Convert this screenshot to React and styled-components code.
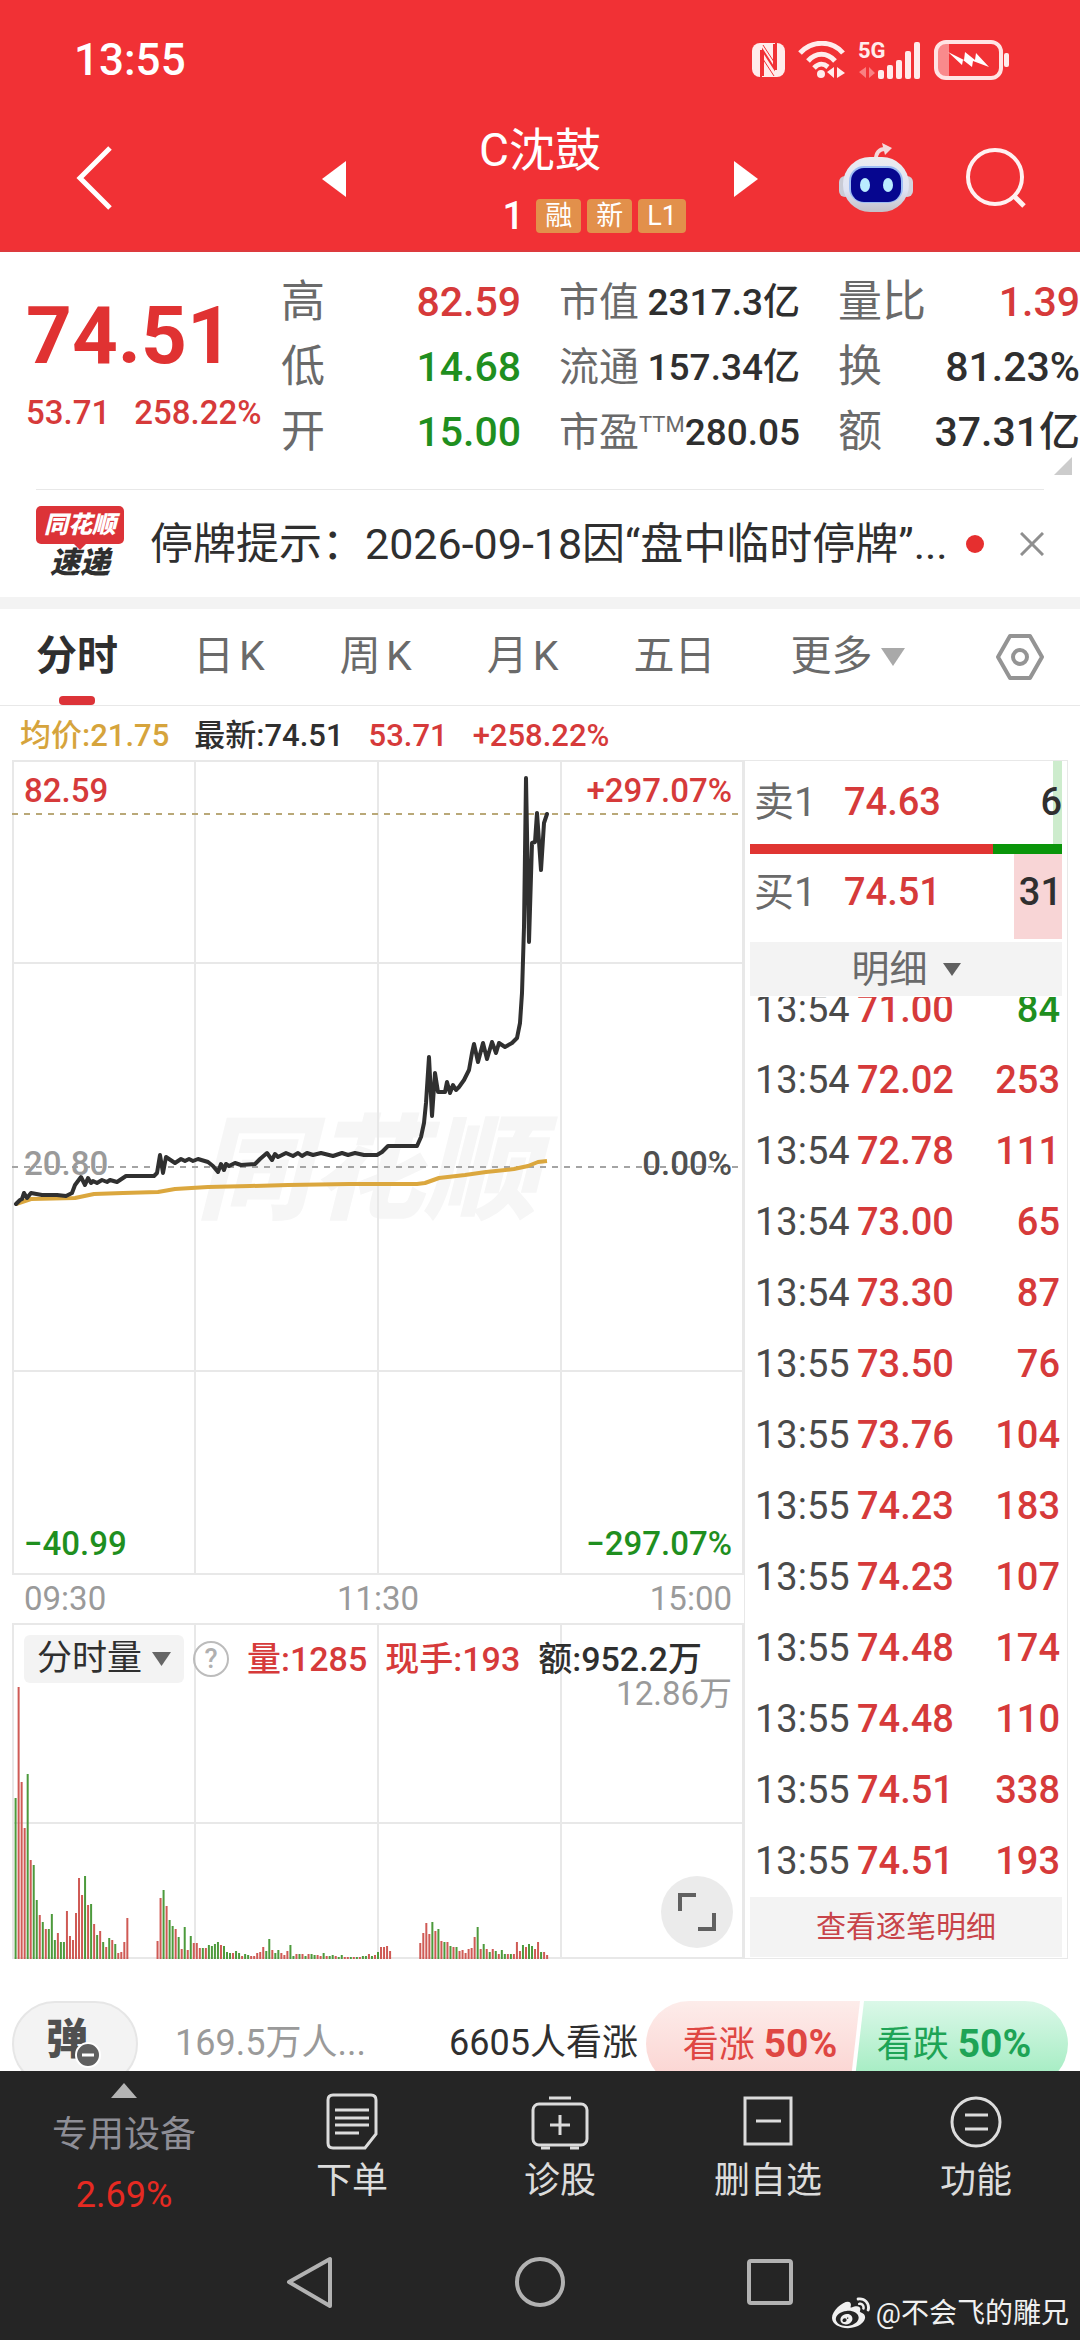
import React from 'react';
import styled, { createGlobalStyle } from 'styled-components';
import { FaWeibo } from 'react-icons/fa';

const colors = {
	brand: '#f13135',
	red: '#d63a3a',
	green: '#1f8f1f',
	text: '#2f2f2f',
	label: '#6a6a6a',
	muted: '#9a9a9a',
	line: '#e8e8e8',
	band: '#f3f3f3',
	dock: '#252525',
};

const toneColor = {
	up: colors.red,
	down: colors.green,
	dark: colors.text,
	avg: '#d6a43c',
};

const GlobalStyle = createGlobalStyle`
	* {
		box-sizing: border-box;
	}
	body {
		margin: 0;
		background: #ffffff;
		color: ${colors.text};
		font-family: Roboto, 'Noto Sans CJK SC', sans-serif;
		line-height: 1.2;
	}
	button, select {
		padding: 0;
		border: none;
		background: none;
		color: inherit;
		font: inherit;
	}
	svg {
		display: block;
	}
	dl, dd, ul {
		margin: 0;
		padding: 0;
	}
	ul {
		list-style: none;
	}
`;

const Page = styled.div`
	display: flex;
	flex-direction: column;
	height: 100vh;
	overflow: hidden;
	white-space: nowrap;
`;

const Header = styled.header`
	flex: none;
	background: ${colors.brand};
	border-bottom: 2px solid #dd3a3e;
	color: #ffffff;
`;

const StatusBar = styled.div`
	display: flex;
	align-items: center;
	justify-content: space-between;
	height: 120px;
	padding: 0 70px 0 74px;
`;

const Clock = styled.span`
	font-size: 44px;
	font-weight: 500;
`;

const StatusIcons = styled.div`
	display: flex;
	align-items: center;
	gap: 12px;
`;

const TitleBar = styled.div`
	display: grid;
	grid-template-columns: 1fr 436px 1fr;
	align-items: center;
	height: 130px;
	padding: 0 54px 0 76px;
`;

const BackButton = styled.button`
	justify-self: start;
	margin-top: -14px;
`;

const StockSwitch = styled.div`
	display: flex;
	align-items: center;
	justify-content: space-between;
	margin-left: -11px;
	margin-right: 11px;
`;

const StepButton = styled.button`
	padding-bottom: 12px;
`;

const StockTitle = styled.div`
	display: flex;
	flex-direction: column;
	align-items: center;
	padding-bottom: 16px;
`;

const StockName = styled.h1`
	margin: 0 0 20px;
	font-size: 46px;
	font-weight: 400;
	line-height: 58px;
`;

const StockMeta = styled.div`
	display: flex;
	align-items: center;
	gap: 6px;
`;

const StockCode = styled.span`
	width: 130px;
	margin-right: 6px;
	font-size: 38px;
	line-height: 34px;
	font-weight: 500;
	text-align: right;
`;

const Tag = styled.span`
	padding: 0 9px;
	border-radius: 4px;
	background: #e2904b;
	font-size: 27px;
	line-height: 34px;
`;

const HeaderTools = styled.div`
	display: flex;
	align-items: center;
	justify-content: flex-end;
	gap: 52px;
	padding-bottom: 14px;
`;

const Main = styled.main`
	flex: 1;
	min-height: 0;
	overflow: hidden;
`;

const Quote = styled.section`
	position: relative;
	display: grid;
	grid-template-columns: minmax(0, 217fr) minmax(0, 240fr) minmax(0, 241fr) minmax(0, 242fr);
	column-gap: 38px;
	padding: 18px 0 24px 26px;
`;

const CornerMark = styled.svg`
	position: absolute;
	right: 8px;
	bottom: 14px;
`;

const LastPrice = styled.div`
	margin-top: 26px;
	color: #e03232;
	font-size: 80px;
	font-weight: 700;
	line-height: 80px;
`;

const Change = styled.div`
	display: flex;
	gap: 24px;
	margin-top: 17px;
	color: ${colors.red};
	font-size: 33px;
	font-weight: 500;
	line-height: 40px;
`;

const Stat = styled.div`
	display: flex;
	justify-content: space-between;
	line-height: 65px;
`;

const StatLabel = styled.dt`
	color: ${colors.label};
	font-size: ${p => (p.$small ? 40 : 44)}px;
	sup {
		font-size: 22px;
		line-height: 22px;
	}
`;

const StatValue = styled.dd`
	color: ${p => toneColor[p.$tone]};
	font-size: ${p => (p.$small ? 37 : 41)}px;
	font-weight: 500;
`;

const Notice = styled.section`
	display: flex;
	align-items: center;
	height: 108px;
	margin: 0 36px;
	border-top: 1px solid ${colors.line};
`;

const NoticeLogo = styled.div`
	display: flex;
	flex-direction: column;
	align-items: center;
	width: 88px;
	margin-right: 26px;
	font-weight: 900;
	font-style: italic;
`;

const LogoBadge = styled.span`
	position: relative;
	width: 100%;
	background: #dc3338;
	border-radius: 5px;
	color: #ffffff;
	font-size: 24px;
	line-height: 38px;
	text-align: center;
	&::after {
		content: '';
		position: absolute;
		top: 100%;
		left: 38px;
		border: 6px solid transparent;
		border-top-color: #dc3338;
		border-bottom: none;
	}
`;

const LogoText = styled.span`
	font-size: 30px;
	line-height: 38px;
`;

const NoticeText = styled.p`
	flex: 1;
	min-width: 0;
	margin: 0;
	overflow: hidden;
	font-size: 43px;
	line-height: 60px;
`;

const Dot = styled.span`
	width: 18px;
	height: 18px;
	margin: 0 36px 0 12px;
	border-radius: 50%;
	background: #e62f2f;
`;

const Tabs = styled.nav`
	display: flex;
	align-items: center;
	gap: 75px;
	height: 109px;
	padding: 0 36px;
	border-top: 12px solid ${colors.band};
	border-bottom: 1px solid ${colors.line};
`;

const Tab = styled.button`
	position: relative;
	display: flex;
	align-items: center;
	gap: 8px;
	height: 100%;
	color: ${p => (p.$active ? colors.text : colors.label)};
	font-size: 41px;
	font-weight: ${p => (p.$active ? 700 : 400)};
	text-autospace: normal;
	&::after {
		content: '';
		display: ${p => (p.$active ? 'block' : 'none')};
		position: absolute;
		left: 50%;
		bottom: 0;
		width: 36px;
		height: 9px;
		margin-left: -18px;
		border-radius: 4px;
		background: #dc3338;
	}
`;

const SettingsButton = styled.button`
	margin-left: auto;
`;

const ChartInfo = styled.div`
	display: flex;
	gap: 25px;
	height: 54px;
	padding-left: 20px;
	font-size: 31px;
	font-weight: 500;
	line-height: 60px;
`;

const Toned = styled.span`
	color: ${p => toneColor[p.$tone]};
`;

const Board = styled.section`
	display: grid;
	grid-template-columns: 732fr 324fr;
	margin: 0 12px;
`;

const PriceChart = styled.div`
	position: relative;
	height: 815px;
`;

const Plot = styled.svg`
	width: 100%;
	height: 100%;
`;

const Watermark = styled.div`
	position: absolute;
	top: 346px;
	left: 184px;
	color: #f6f6f6;
	font-size: 114px;
	font-weight: 900;
	font-style: italic;
	line-height: 130px;
	z-index: -1;
`;

const AxisLabel = styled.span`
	position: absolute;
	${p => p.$side}: 12px;
	top: ${p => p.$top}px;
	color: ${p => p.$color};
	font-size: 33px;
	font-weight: ${p => (p.$light ? 400 : 500)};
	line-height: 40px;
`;

const TimeAxis = styled.div`
	display: flex;
	justify-content: space-between;
	padding: 0 12px;
	color: ${colors.muted};
	font-size: 33px;
	line-height: 48px;
`;

const VolumeChart = styled.div`
	position: relative;
	height: 336px;
`;

const VolumeHead = styled.div`
	position: absolute;
	top: 12px;
	left: 12px;
	display: flex;
	align-items: center;
	gap: 18px;
	font-size: 34px;
	font-weight: 500;
	line-height: 48px;
`;

const Picker = styled.label`
	display: flex;
	align-items: center;
	justify-content: center;
	gap: ${p => (p.$wide ? 14 : 9)}px;
	height: ${p => (p.$wide ? 54 : 48)}px;
	margin-top: ${p => (p.$wide ? 3 : 0)}px;
	padding: 0 13px;
	border-radius: ${p => (p.$wide ? 0 : 6)}px;
	background: ${colors.band};
	color: ${p => (p.$wide ? colors.label : colors.text)};
	font-size: ${p => (p.$wide ? 38 : 35)}px;
	font-weight: 400;
	select {
		appearance: none;
		line-height: 48px;
	}
`;

const HelpButton = styled.button`
	width: 36px;
	height: 36px;
	margin: 0 0 0 -9px;
	border: 2px solid #bcbcbc;
	border-radius: 50%;
	color: #b0b0b0;
	font-size: 27px;
	line-height: 32px;
`;

const ExpandButton = styled.button`
	position: absolute;
	right: 11px;
	bottom: 11px;
	display: flex;
	align-items: center;
	justify-content: center;
	width: 72px;
	height: 72px;
	border-radius: 50%;
	background: #ebebeb;
`;

const OrderPanel = styled.aside`
	display: flex;
	flex-direction: column;
	padding: 0 5px 1px;
	border: 1px solid ${colors.line};
`;

const OrderRow = styled.div`
	display: flex;
	align-items: center;
	height: ${p => (p.$buy ? 85 : 83)}px;
	padding: 0 0 ${p => (p.$buy ? 8 : 0)}px 4px;
	background: linear-gradient(${p => (p.$buy ? '#f8d5d6, #f8d5d6' : '#cdeccd, #cdeccd')}) right / ${p => (p.$buy ? 48 : 9)}px 100% no-repeat;
	font-size: 38px;
	font-weight: 500;
`;

const OrderSide = styled.span`
	width: 90px;
	color: ${colors.label};
	font-size: 40px;
	font-weight: 400;
`;

const OrderVolume = styled.span`
	margin-left: auto;
`;

const RatioBar = styled.div`
	height: 10px;
	background: linear-gradient(to right, #e03532 78%, #0a950a 78%);
`;

const TickList = styled.ul`
	display: flex;
	flex-direction: column;
	justify-content: flex-end;
	height: 900px;
	margin-top: 1px;
	overflow: hidden;
`;

const Tick = styled.li`
	display: grid;
	flex: none;
	grid-template-columns: 102px 1fr auto;
	padding: 0 2px 0 5px;
	font-size: 38px;
	font-weight: 500;
	line-height: 71px;
`;

const TickTime = styled.span`
	color: #4a4a4a;
	font-weight: 400;
`;

const DetailLink = styled.a`
	background: ${colors.band};
	color: #c8444a;
	font-size: 30px;
	line-height: 60px;
	text-align: center;
	text-decoration: none;
`;

const VoteRow = styled.section`
	display: flex;
	align-items: center;
	height: 86px;
	margin: 42px 12px 0;
	font-size: 36px;
`;

const BulletButton = styled.button`
	position: relative;
	width: 126px;
	height: 86px;
	padding: 0 16px 8px 0;
	border: 2px solid #e6e6e6;
	border-radius: 43px;
	background: ${colors.band};
	color: #505050;
	font-size: 42px;
	font-weight: 900;
	svg {
		position: absolute;
		left: 60px;
		top: 38px;
	}
`;

const Watching = styled.span`
	flex: 1;
	margin-left: 37px;
	color: ${colors.muted};
`;

const VoteButton = styled.button`
	height: 86px;
	width: 214px;
	margin-left: ${p => (p.$up ? 8 : -6)}px;
	padding-${p => (p.$up ? 'left' : 'right')}: 14px;
	border-radius: ${p => (p.$up ? '43px 0 0 43px' : '0 43px 43px 0')};
	background: ${p => (p.$up ? 'linear-gradient(#fdecea, #fbd2cf)' : 'linear-gradient(#dbf8e8, #9debbd)')};
	clip-path: ${p => (p.$up ? 'polygon(0 0, 100% 0, 204px 100%, 0 100%)' : 'polygon(10px 0, 100% 0, 100% 100%, 0 100%)')};
	color: ${p => (p.$up ? '#df4743' : '#1ea456')};
	font-size: 36px;
	b {
		font-size: 39px;
	}
`;

const Dock = styled.footer`
	position: relative;
	flex: none;
	height: 269px;
	background: ${colors.dock};
	color: #dcdcdc;
`;

const DockActions = styled.div`
	display: grid;
	grid-template-columns: 31fr 26fr 26fr 26fr 26fr;
	height: 153px;
`;

const DockButton = styled.button`
	display: flex;
	flex-direction: column;
	align-items: center;
	gap: 3px;
	padding-top: 20px;
	font-size: 36px;
	line-height: 54px;
`;

const SectorButton = styled.button`
	display: flex;
	flex-direction: column;
	align-items: center;
	padding-top: 12px;
	color: #8e8e96;
	font-size: 36px;
	line-height: 60px;
	svg {
		margin-bottom: 7px;
	}
`;

const SectorChange = styled.span`
	color: #e62a22;
`;

const SystemNav = styled.div`
	display: grid;
	grid-template-columns: repeat(3, 230px);
	justify-content: center;
	justify-items: center;
	padding-top: 32px;
`;

const Signature = styled.div`
	position: absolute;
	right: 11px;
	bottom: 6px;
	display: flex;
	align-items: center;
	gap: 6px;
	color: #f0f0f0;
	font-size: 28px;
	line-height: 40px;
`;

const statColumns = [
	{
		rows: [
			['高', '82.59', 'up'],
			['低', '14.68', 'down'],
			['开', '15.00', 'down'],
		],
	},
	{
		small: true,
		rows: [
			['市值', '2317.3亿', 'dark'],
			['流通', '157.34亿', 'dark'],
			['市盈', '280.05', 'dark', 'TTM'],
		],
	},
	{
		rows: [
			['量比', '1.39', 'up'],
			['换', '81.23%', 'dark'],
			['额', '37.31亿', 'dark'],
		],
	},
];

const ticks = [
	['13:54', '71.00', '84', 'down'],
	['13:54', '72.02', '253', 'up'],
	['13:54', '72.78', '111', 'up'],
	['13:54', '73.00', '65', 'up'],
	['13:54', '73.30', '87', 'up'],
	['13:55', '73.50', '76', 'up'],
	['13:55', '73.76', '104', 'up'],
	['13:55', '74.23', '183', 'up'],
	['13:55', '74.23', '107', 'up'],
	['13:55', '74.48', '174', 'up'],
	['13:55', '74.48', '110', 'up'],
	['13:55', '74.51', '338', 'up'],
	['13:55', '74.51', '193', 'up'],
];

const priceLine =
	'4,444 8,440 10,439 12,433 15,438 19,433 30,435 45,435 54,436 60,433 63,425 69,417 73,425 76,418 79,423 81,421 85,423 90,420 95,422 98,420 105,422 ' +
	'114,416 142,416 145,413 148,395 151,413 154,397 157,399 163,403 169,399 173,401 177,399 181,401 186,399 196,402 201,406 206,412 209,404 212,410 214,404 217,406 ' +
	'223,403 229,405 243,404 248,399 255,393 260,400 263,394 266,397 274,393 281,396 286,393 290,396 295,393 301,395 309,393 321,396 330,393 336,395 343,393 352,395 ' +
	'365,395 370,392 376,386 405,386 409,377 412,363 414,343 417,297 420,356 423,313 426,332 433,332 435,322 438,333 441,325 444,330 447,327 452,320 457,310 460,293 ' +
	'462,284 466,302 471,283 475,299 480,282 484,293 487,283 493,287 500,283 505,278 508,263 510,233 512,167 514,18 517,182 520,83 523,82 525,53 529,110 532,63 535,54';

const averageLine =
	'4,444 19,439 63,438 82,434 111,433 146,432 163,429 196,427 238,426 276,425 337,424 405,424 413,423 427,418 453,415 474,412 502,409 516,406 526,402 535,401';

// one entry per minute: direction + bar height, "-" for a minute without trades
const volumes = (
	'g161 r272 r177 r131 g185 r99 g94 g59 r44 g37 r30 g30 g45 g19 r26 g17 g17 r48 r23 r19 r46 r81 r64 g83 r54 g55 r35 g24 r28 g17 r12 g21 r19 g15 r6 r7 r17 r41 ' +
	'- - - - - - - - - r18 r61 g69 r53 g39 g33 r30 g22 r10 g32 r9 g23 r16 r16 r11 g11 r11 g14 g13 g15 g17 r14 g13 g7 g6 r6 g8 g6 r3 g5 g4 r3 r3 r6 r7 r12 g8 g20 r9 ' +
	'g6 g9 r6 r4 r8 g14 g3 r5 g5 r5 g3 r5 g5 g4 r4 r3 g6 r3 g3 g4 r3 g2 g4 r2 r2 g2 r2 g2 r2 g3 g3 r5 g3 r4 g7 r12 r12 r13 r8 ' +
	'- - - - - - - - - r16 r26 r36 r25 g37 r28 g30 r18 g17 r17 g13 r12 g12 r8 r9 r6 r10 r11 r22 g32 r10 g15 r10 g7 r10 g8 r5 g9 g5 r5 g5 r5 r17 r8 g14 r12 g15 g13 r10 r17 g7 r7 r4'
).split(' ');

const Triangle = ({ dir, w, h, fill }) => {
	const points = {
		left: `${w},0 ${w},${h} 0,${h / 2}`,
		right: `0,0 ${w},${h / 2} 0,${h}`,
		up: `${w / 2},0 ${w},${h} 0,${h}`,
		down: `0,0 ${w},0 ${w / 2},${h}`,
	};
	return (
		<svg width={w} height={h} viewBox={`0 0 ${w} ${h}`} aria-hidden="true">
			<polygon points={points[dir]} fill={fill} />
		</svg>
	);
};

const SignalIcons = () => (
	<StatusIcons>
		<svg width="35" height="38" viewBox="0 0 35 38">
			<rect x="1" y="2" width="33" height="34" rx="8" fill="#ffecec" />
			<path d="M12 35V10l11 17V3" fill="none" stroke={colors.brand} strokeWidth="2" />
			<path d="M12 4l13 20M10 15l13 20" fill="none" stroke={colors.brand} strokeWidth="1" />
			<path d="M10 36V9M25 2v27" stroke={colors.brand} strokeWidth="2" />
		</svg>
		<svg width="48" height="38" viewBox="0 0 48 38" fill="none" stroke="#ffecec">
			<path d="M2 12C14-1 34-1 45 12" strokeWidth="5" />
			<path d="M10 20c8-9 19-9 27 0" strokeWidth="5" />
			<path d="M16 27c5-5 9-5 14-1" strokeWidth="5" />
			<circle cx="23" cy="33" r="4" fill="#ffecec" stroke="none" />
			<path d="M36 26v11l-7-6zM39 37V26l8 6z" fill="#ffecec" stroke="none" />
		</svg>
		<svg width="64" height="50" viewBox="0 -6 64 50">
			<text x="0" y="17" fontSize="22" fontWeight="700" fill="#ffecec">5G</text>
			<path d="M8 26v11l-7-6zM11 37V26l6 6z" fill="#f98082" />
			<g fill="#ffecec">
				<rect x="20" y="29" width="6" height="9" rx="2" />
				<rect x="29" y="24" width="6" height="14" rx="2" />
				<rect x="38" y="19" width="6" height="19" rx="2" />
				<rect x="47" y="10" width="6" height="28" rx="2" />
				<rect x="56" y="1" width="6" height="37" rx="2" />
			</g>
		</svg>
		<svg width="76" height="40" viewBox="0 0 76 40">
			<path d="M14 3h1v34h-3q-9 0-9-9V12q0-9 11-9z" fill="#f98a8c" />
			<rect x="2" y="2" width="65" height="36" rx="10" fill="none" stroke="#ffe4e4" strokeWidth="4" />
			<rect x="70" y="13" width="5" height="14" rx="2" fill="#ffecec" />
			<path d="M14 12l16 8 1-8 10 8 1-7 13 14-16-6-1 6-9-7-1 5z" fill="#ffffff" />
		</svg>
	</StatusIcons>
);

const RobotIcon = () => (
	<svg width="76" height="70" viewBox="0 0 76 70">
		<defs>
			<linearGradient id="shell" x1="0" y1="0" x2="0" y2="1">
				<stop offset="0" stopColor="#ececf0" />
				<stop offset="0.6" stopColor="#dfe3f3" />
				<stop offset="1" stopColor="#c3c0c8" />
			</linearGradient>
		</defs>
		<rect x="1" y="33" width="12" height="21" rx="6" fill="#c9cbd6" />
		<rect x="63" y="33" width="12" height="21" rx="6" fill="#d3d4de" />
		<path d="M38 16c0-6 3-10 9-10" fill="none" stroke="#f3d9dc" strokeWidth="4" />
		<path d="M44 0l10 5-7 7z" fill="#f3d9dc" />
		<rect x="5" y="14" width="66" height="55" rx="27" fill="url(#shell)" />
		<rect x="11" y="23" width="54" height="37" rx="15" fill="#9dbdf4" />
		<rect x="13" y="25" width="50" height="34" rx="13" fill="#06068f" />
		<ellipse cx="27" cy="42" rx="5" ry="7" fill="#b9ecff" />
		<ellipse cx="50" cy="42" rx="5" ry="7" fill="#b9ecff" />
	</svg>
);

const dockItems = [
	{
		label: '下单',
		icon: (
			<svg width="60" height="60" viewBox="0 0 60 60" fill="none" stroke="#dcdcdc" strokeWidth="3">
				<path d="M11 4h38q5 0 5 5v34L43 57H11q-5 0-5-5V9q0-5 5-5z" />
				<path d="M13 19h34M13 27h34M13 34h34M13 42h24" />
			</svg>
		),
	},
	{
		label: '诊股',
		icon: (
			<svg width="60" height="60" viewBox="0 0 60 60" fill="none" stroke="#dcdcdc" strokeWidth="3">
				<rect x="3" y="13" width="54" height="41" rx="6" />
				<path d="M19 7h22M30 24v20M20 34h20M11 57h9M40 57h9" />
			</svg>
		),
	},
	{
		label: '删自选',
		icon: (
			<svg width="60" height="60" viewBox="0 0 60 60" fill="none" stroke="#dcdcdc" strokeWidth="3">
				<rect x="7" y="7" width="46" height="46" />
				<path d="M18 30h25" />
			</svg>
		),
	},
	{
		label: '功能',
		icon: (
			<svg width="60" height="60" viewBox="0 0 60 60" fill="none" stroke="#dcdcdc" strokeWidth="3">
				<circle cx="30" cy="31" r="24" />
				<path d="M19 24h23M19 38h23" />
			</svg>
		),
	},
];

const Grid = ({ rows, bottom }) => (
	<g stroke={colors.line} strokeWidth="2" fill="none">
		<rect x="1" y="1" width="730" height={bottom - 2} />
		<path d={`M183 0V${bottom}M366 0V${bottom}M549 0V${bottom}`} />
		{rows.map(y => (
			<path key={y} d={`M0 ${y}H732`} />
		))}
	</g>
);

const App = () => {
	const [tab, setTab] = React.useState('分时');

	return (
		<Page>
			<GlobalStyle />
			<Header>
				<StatusBar>
					<Clock>13:55</Clock>
					<SignalIcons />
				</StatusBar>
				<TitleBar>
					<BackButton aria-label="返回">
						<svg width="36" height="64" viewBox="0 0 36 64" fill="none" stroke="#ffffff" strokeWidth="5">
							<path d="M34 2L4 32l30 30" />
						</svg>
					</BackButton>
					<StockSwitch>
						<StepButton aria-label="上一只">
							<Triangle dir="left" w={24} h={36} fill="#ffffff" />
						</StepButton>
						<StockTitle>
							<StockName>C沈鼓</StockName>
							<StockMeta>
								<StockCode>1</StockCode>
								<Tag>融</Tag>
								<Tag>新</Tag>
								<Tag>L1</Tag>
							</StockMeta>
						</StockTitle>
						<StepButton aria-label="下一只">
							<Triangle dir="right" w={24} h={36} fill="#ffffff" />
						</StepButton>
					</StockSwitch>
					<HeaderTools>
						<button aria-label="助手">
							<RobotIcon />
						</button>
						<button aria-label="搜索">
							<svg width="60" height="60" viewBox="0 0 60 60" fill="none" stroke="#fff1f1" strokeWidth="4">
								<circle cx="29" cy="29" r="27" />
								<path d="M47 47l11 11" strokeWidth="5" />
							</svg>
						</button>
					</HeaderTools>
				</TitleBar>
			</Header>

			<Main>
				<Quote>
					<div>
						<LastPrice>74.51</LastPrice>
						<Change>
							<span>53.71</span>
							<span>258.22%</span>
						</Change>
					</div>
					{statColumns.map((column, i) => (
						<dl key={i}>
							{column.rows.map(([label, value, tone, sup]) => (
								<Stat key={label}>
									<StatLabel $small={column.small}>
										{label}
										{sup && <sup>{sup}</sup>}
									</StatLabel>
									<StatValue $small={column.small} $tone={tone}>{value}</StatValue>
								</Stat>
							))}
						</dl>
					))}
					<CornerMark width="18" height="18" viewBox="0 0 18 18">
						<path d="M18 0v18H0z" fill="#cccccc" />
					</CornerMark>
				</Quote>

				<Notice>
					<NoticeLogo>
						<LogoBadge>同花顺</LogoBadge>
						<LogoText>速递</LogoText>
					</NoticeLogo>
					<NoticeText>停牌提示：2026-09-18因“盘中临时停牌”...</NoticeText>
					<Dot />
					<button aria-label="关闭">
						<svg width="24" height="24" viewBox="0 0 24 24" stroke="#8f8f8f" strokeWidth="3">
							<path d="M1 1l22 22M23 1L1 23" />
						</svg>
					</button>
				</Notice>

				<Tabs>
					{['分时', '日K', '周K', '月K', '五日'].map(name => (
						<Tab key={name} $active={tab === name} onClick={() => setTab(name)}>{name}</Tab>
					))}
					<Tab aria-haspopup="menu">
						更多
						<Triangle dir="down" w={24} h={18} fill="#a9a9a9" />
					</Tab>
					<SettingsButton aria-label="设置">
						<svg width="48" height="48" viewBox="0 0 48 48" fill="none" stroke="#949494" strokeWidth="4" strokeLinejoin="round">
							<path d="M14 3h20l12 21-12 21H14L2 24z" />
							<circle cx="24" cy="24" r="7" />
						</svg>
					</SettingsButton>
				</Tabs>

				<ChartInfo>
					<Toned $tone="avg">均价:21.75</Toned>
					<Toned $tone="dark">最新:74.51</Toned>
					<Toned $tone="up">53.71</Toned>
					<Toned $tone="up">+258.22%</Toned>
				</ChartInfo>

				<Board>
					<div>
						<PriceChart>
							<Watermark>同花顺</Watermark>
							<Plot viewBox="0 0 732 815" preserveAspectRatio="none">
								<Grid rows={[203, 611]} bottom={815} />
								<path d="M0 54H732" stroke="#b9a878" strokeWidth="2" strokeDasharray="6 6" />
								<path d="M0 407H732" stroke="#a4a4a4" strokeWidth="2" strokeDasharray="6 6" />
								<polyline points={averageLine} fill="none" stroke="#dba73e" strokeWidth="4" strokeLinejoin="round" />
								<polyline points={priceLine} fill="none" stroke="#303030" strokeWidth="4" strokeLinejoin="round" strokeLinecap="round" />
							</Plot>
							<AxisLabel $side="left" $top={11} $color={colors.red}>82.59</AxisLabel>
							<AxisLabel $side="right" $top={11} $color={colors.red}>+297.07%</AxisLabel>
							<AxisLabel $side="left" $top={384} $color={colors.muted}>20.80</AxisLabel>
							<AxisLabel $side="right" $top={384} $color="#505050">0.00%</AxisLabel>
							<AxisLabel $side="left" $top={764} $color={colors.green}>−40.99</AxisLabel>
							<AxisLabel $side="right" $top={764} $color={colors.green}>−297.07%</AxisLabel>
						</PriceChart>
						<TimeAxis>
							<span>09:30</span>
							<span>11:30</span>
							<span>15:00</span>
						</TimeAxis>
						<VolumeChart>
							<Plot viewBox="0 0 732 336" preserveAspectRatio="none">
								<Grid rows={[200]} bottom={336} />
								{volumes.map((v, i) => {
									const size = Number(v.slice(1));
									return size > 0 && (
										<rect key={i} x={2.6 + i * 3.02} y={336 - size} width="2" height={size} fill={v[0] === 'r' ? '#cf5a55' : '#4d9a3c'} />
									);
								})}
							</Plot>
							<VolumeHead>
								<Picker>
									<select aria-label="副图指标">
										<option>分时量</option>
									</select>
									<Triangle dir="down" w={19} h={14} fill="#666666" />
								</Picker>
								<HelpButton aria-label="说明">?</HelpButton>
								<Toned $tone="up">量:1285</Toned>
								<Toned $tone="up">现手:193</Toned>
								<Toned $tone="dark">额:952.2万</Toned>
							</VolumeHead>
							<AxisLabel $side="right" $top={51} $color={colors.muted} $light>12.86万</AxisLabel>
							<ExpandButton aria-label="全屏">
								<svg width="38" height="38" viewBox="0 0 38 38" fill="none" stroke="#606060" strokeWidth="4">
									<path d="M2 18V2h16M20 36h16V20" />
								</svg>
							</ExpandButton>
						</VolumeChart>
					</div>

					<OrderPanel>
						<OrderRow>
							<OrderSide>卖1</OrderSide>
							<Toned $tone="up">74.63</Toned>
							<OrderVolume>6</OrderVolume>
						</OrderRow>
						<RatioBar />
						<OrderRow $buy>
							<OrderSide>买1</OrderSide>
							<Toned $tone="up">74.51</Toned>
							<OrderVolume>31</OrderVolume>
						</OrderRow>
						<Picker $wide>
							<select aria-label="盘口类型">
								<option>明细</option>
							</select>
							<Triangle dir="down" w={18} h={13} fill="#606060" />
						</Picker>
						<TickList>
							{ticks.map(([time, price, volume, tone], i) => (
								<Tick key={i}>
									<TickTime>{time}</TickTime>
									<Toned $tone="up">{price}</Toned>
									<Toned $tone={tone}>{volume}</Toned>
								</Tick>
							))}
						</TickList>
						<DetailLink href="#ticks">查看逐笔明细</DetailLink>
					</OrderPanel>
				</Board>

				<VoteRow>
					<BulletButton aria-label="弹幕">
						弹
						<svg width="28" height="28" viewBox="0 0 28 28">
							<circle cx="14" cy="14" r="12" fill="#606060" stroke="#ffffff" strokeWidth="2" />
							<path d="M8 14h12" stroke="#ffffff" strokeWidth="3" />
						</svg>
					</BulletButton>
					<Watching>169.5万人...</Watching>
					<span>6605人看涨</span>
					<VoteButton $up>
						看涨 <b>50%</b>
					</VoteButton>
					<VoteButton>
						看跌 <b>50%</b>
					</VoteButton>
				</VoteRow>
			</Main>

			<Dock>
				<DockActions>
					<SectorButton>
						<Triangle dir="up" w={26} h={15} fill="#b4b4b4" />
						<span>专用设备</span>
						<SectorChange>2.69%</SectorChange>
					</SectorButton>
					{dockItems.map(item => (
						<DockButton key={item.label}>
							{item.icon}
							<span>{item.label}</span>
						</DockButton>
					))}
				</DockActions>
				<SystemNav>
					<button aria-label="系统返回">
						<svg width="52" height="52" viewBox="0 0 52 52" fill="none" stroke="#b2b2b2" strokeWidth="4" strokeLinejoin="round">
							<path d="M46 3v47L5 26z" />
						</svg>
					</button>
					<button aria-label="主屏幕">
						<svg width="52" height="52" viewBox="0 0 52 52" fill="none" stroke="#b2b2b2" strokeWidth="4">
							<circle cx="26" cy="26" r="23" />
						</svg>
					</button>
					<button aria-label="最近任务">
						<svg width="52" height="52" viewBox="0 0 52 52" fill="none" stroke="#b2b2b2" strokeWidth="4">
							<rect x="5" y="5" width="42" height="42" rx="2" />
						</svg>
					</button>
				</SystemNav>
				<Signature>
					<FaWeibo size={38} />
					@不会飞的雕兄
				</Signature>
			</Dock>
		</Page>
	);
};

export default App;
